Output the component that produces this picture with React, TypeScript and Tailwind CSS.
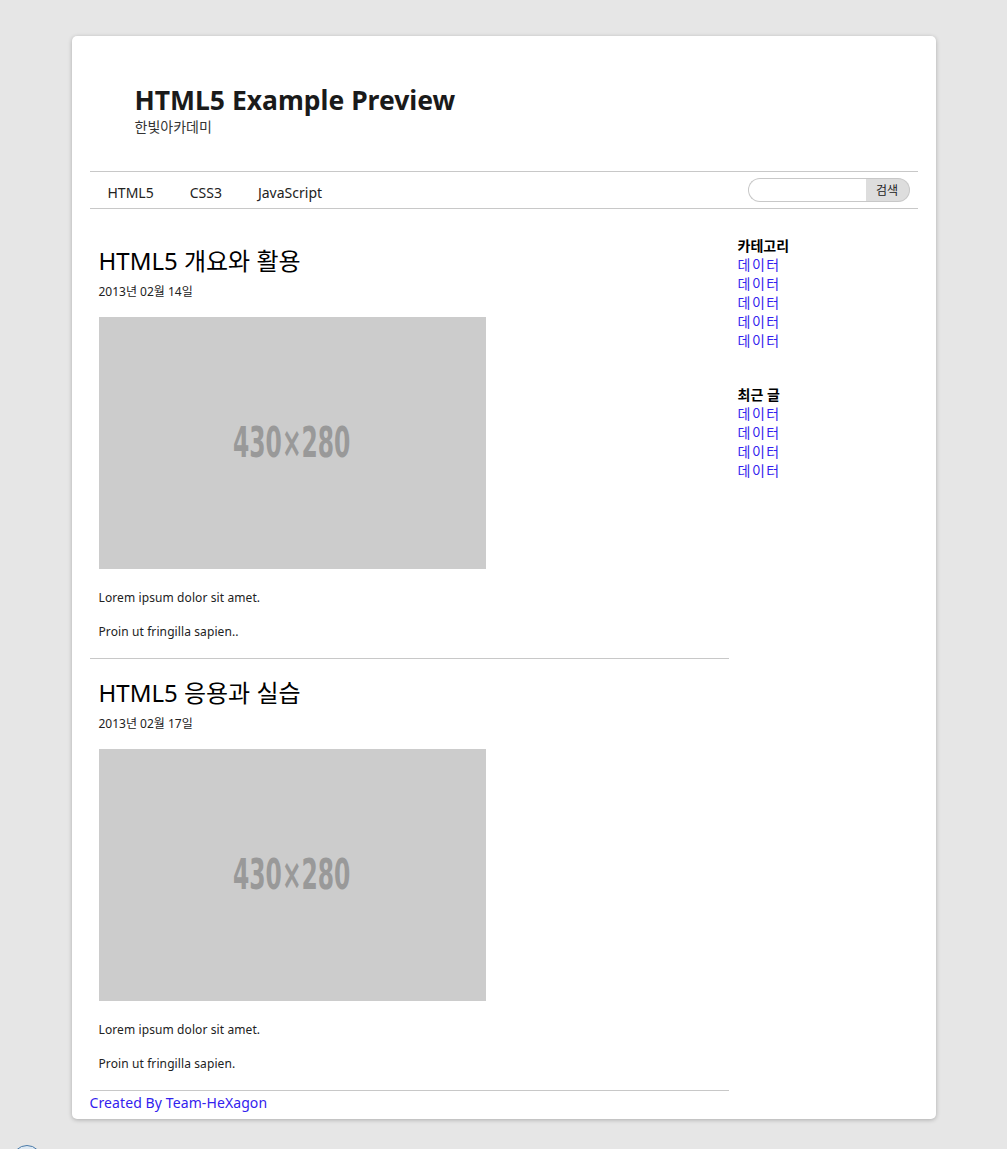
import React from 'react';

const FONT = '"Noto Sans", "Noto Sans CJK KR", sans-serif';

function Placeholder() {
  return (
    <div className="flex h-[252px] w-[387px] items-center justify-center bg-[#cccccc]">
      <span
        className="inline-block scale-x-[0.62] text-[42px] leading-none font-bold text-[#999999]"
        style={{ fontFamily: '"DejaVu Sans Condensed", "Liberation Sans", sans-serif' }}
      >
        430×280
      </span>
    </div>
  );
}

function Article({ title, date, last }: { title: string; date: string; last: string }) {
  return (
    <article className="border-b border-[#c8c8c8] px-[9px] pt-[19px] pb-[18px]">
      <h1 className="text-[24px] leading-[30px] text-black">{title}</h1>
      <p className="mt-[8px] text-[12px] leading-[16px] text-[#222]">{date}</p>
      <div className="mt-[17px]">
        <Placeholder />
      </div>
      <p className="mt-[21px] text-[12px] leading-[16px] tracking-[0.1px] text-[#222]">Lorem ipsum dolor sit amet.</p>
      <p className="mt-[18px] text-[12px] leading-[16px] tracking-[0.1px] text-[#222]">{last}</p>
    </article>
  );
}

function SideBlock({ title, count }: { title: string; count: number }) {
  return (
    <div>
      <h3 className="text-[14px] leading-[19px] font-bold text-black">{title}</h3>
      <ul>
        {Array.from({ length: count }).map((_, i) => (
          <li key={i} className="text-[14px] leading-[19px] tracking-[1.5px] text-[#3322ee]">데이터</li>
        ))}
      </ul>
    </div>
  );
}

export default function App() {
  return (
    <div className="relative min-h-[1149px] bg-[#e6e6e6] pt-[36px]" style={{ fontFamily: FONT }}>
      <div className="mx-auto w-[864px] rounded-[5px] bg-white px-[18px] pb-[7px] shadow-[0_1px_4px_rgba(0,0,0,0.25)]">
        <header className="h-[135px] pt-[47px] pl-[45px]">
          <h1 className="text-[26.5px] leading-[34px] font-bold text-[#1a1a1a]">HTML5 Example Preview</h1>
          <p className="pt-[1px] text-[14px] leading-[18px] text-[#333]">한빛아카데미</p>
        </header>

        <nav className="flex h-[38px] items-center justify-between border-y border-[#c8c8c8]">
          <ul className="flex pt-[5px] text-[14px] leading-[20px] text-[#222]">
            <li className="px-[18px]">HTML5</li>
            <li className="px-[18px]">CSS3</li>
            <li className="px-[18px]">JavaScript</li>
          </ul>
          <div className="mr-[8px] flex h-[24px]">
            <input className="h-[24px] w-[118px] rounded-l-full border border-r-0 border-[#c8c8c8] outline-none" />
            <button className="h-[24px] w-[44px] rounded-r-full border border-l-0 border-[#c8c8c8] bg-[#dddddd] pt-[1px] text-[12px] text-[#222]">
              검색
            </button>
          </div>
        </nav>

        <div className="flex">
          <div className="w-[639px]">
            <section className="pt-[18px]">
              <Article title="HTML5 개요와 활용" date="2013년 02월 14일" last="Proin ut fringilla sapien.." />
              <Article title="HTML5 응용과 실습" date="2013년 02월 17일" last="Proin ut fringilla sapien." />
            </section>
            <footer className="pt-[2px] text-[14px] leading-[19px] tracking-[0.1px] text-[#3322ee]">Created By Team-HeXagon</footer>
          </div>
          <aside className="ml-[9px] flex flex-col gap-[35px] pt-[27px]">
            <SideBlock title="카테고리" count={5} />
            <SideBlock title="최근 글" count={4} />
          </aside>
        </div>
      </div>

      <div className="absolute left-[12px] top-[1145px] h-[30px] w-[30px] rounded-full border border-[#4a7aa8] bg-[#dde8f2]" />
    </div>
  );
}
